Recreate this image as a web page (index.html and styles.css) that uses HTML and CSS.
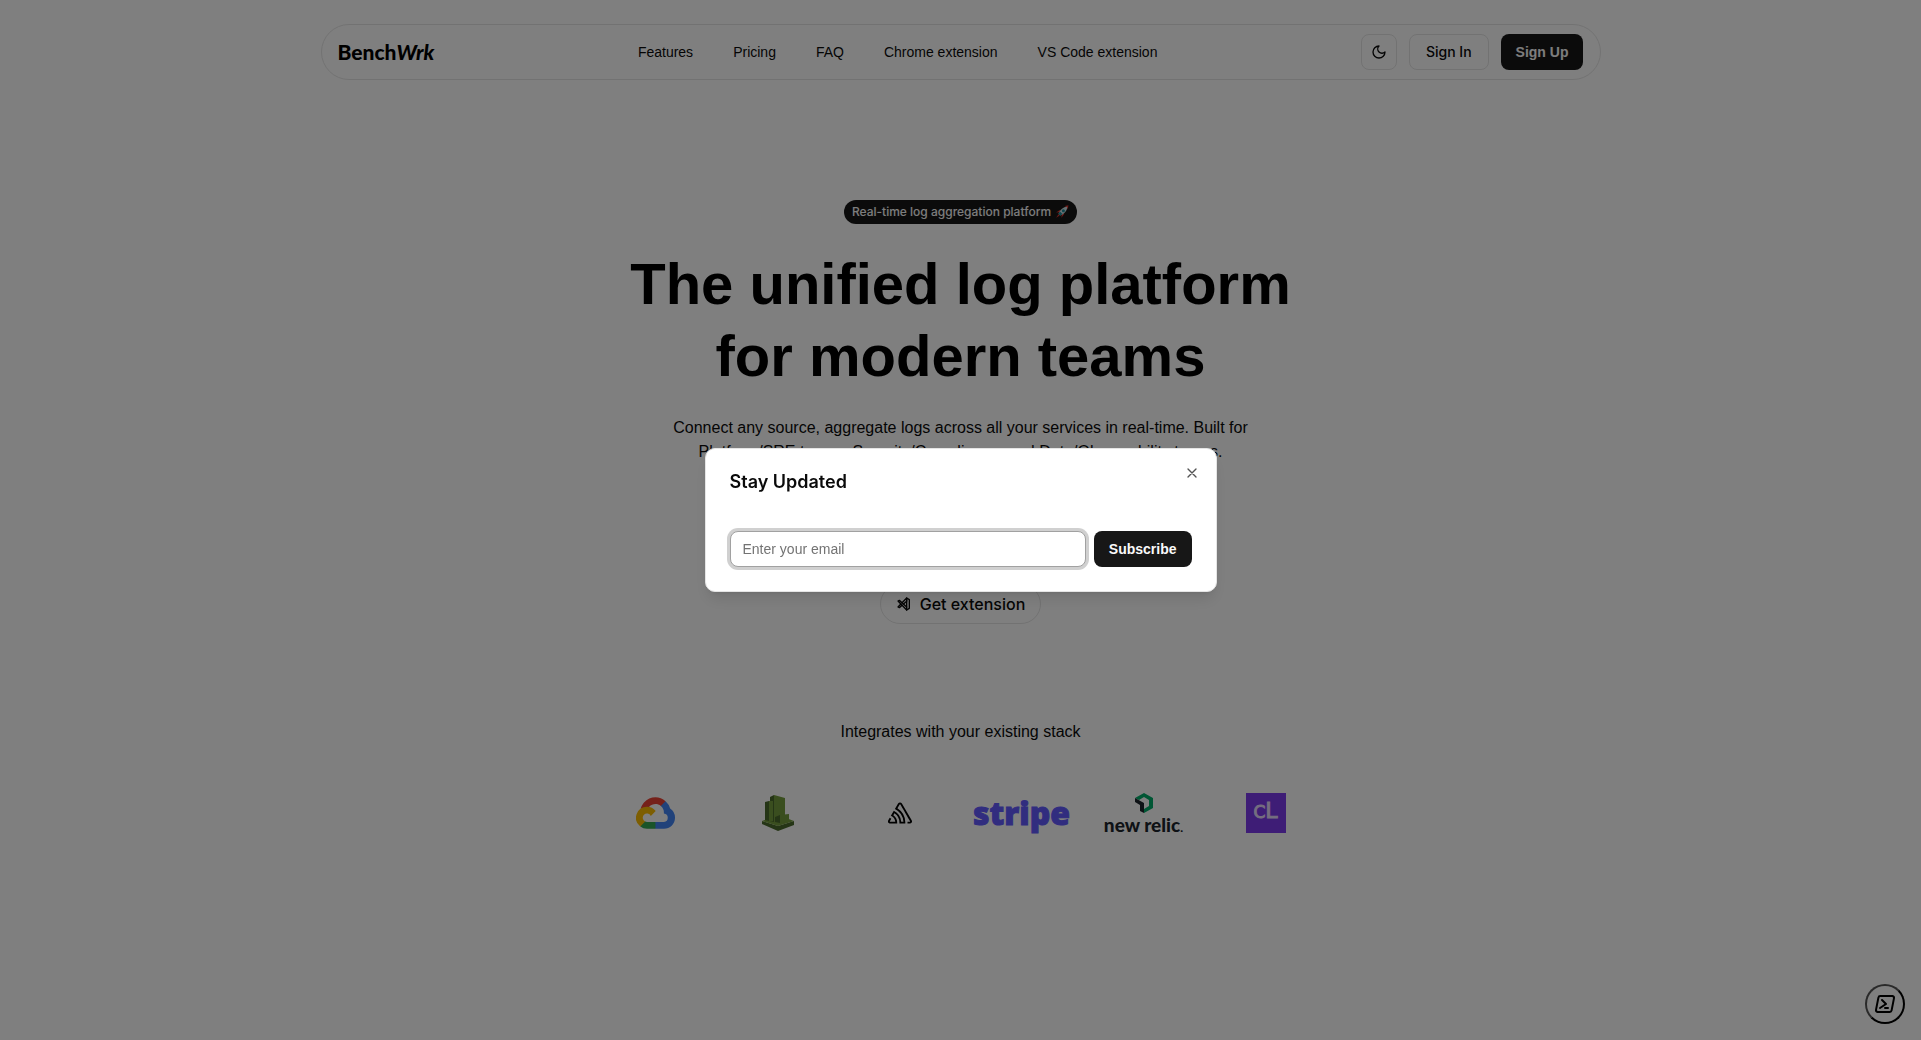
FILE: index.html
```html
<!doctype html>
<html lang="en">
<head>
  <meta charset="UTF-8">
  <meta name="viewport" content="width=device-width, initial-scale=1.0">
  <title>BenchWrk</title>
  <link rel="stylesheet" href="styles.css">
</head>
<body>
<header class="header">
  <a class="brand" href="#">Bench<em>Wrk</em></a>
  <nav class="nav">
    <a href="#">Features</a>
    <a href="#">Pricing</a>
    <a href="#">FAQ</a>
    <a href="#">Chrome extension</a>
    <a href="#">VS Code extension</a>
  </nav>
  <div class="actions">
    <button class="btn btn-icon" type="button" aria-label="Toggle theme">
      <svg class="icon" viewBox="0 0 24 24"><path d="M12 3a6 6 0 0 0 9 9 9 9 0 1 1-9-9Z"/></svg>
    </button>
    <a class="btn" href="#">Sign In</a>
    <a class="btn btn-dark" href="#">Sign Up</a>
  </div>
</header>

<main>
  <section class="hero">
    <div class="badge">
      Real-time log aggregation platform
      <svg class="rocket" viewBox="0 0 12 12">
        <path fill="#e0342c" d="M1 6.500 4.500 4l1 2zM5.500 11 8 7.500 6 6.500zM8.500.8 11.500.3 11 3.500z"/>
        <path fill="#cfe3e6" d="M10.500 1.500C7 1.500 4.500 4 3 7.500L4.500 9C8 7.500 10.500 5 10.500 1.500z"/>
        <circle fill="#1f8f9c" cx="7.200" cy="4.900" r="1.300"/>
        <path fill="#1f8f9c" d="M3 7.500 4.500 9l2-1.200L4.200 5.500z"/>
        <path fill="#e0342c" d="M3 8 1 11l3-2z"/>
      </svg>
    </div>
    <h1>The unified log platform<br>for modern teams</h1>
    <p class="lead">Connect any source, aggregate logs across all your services in real-time. Built for<br>Platform/SRE teams, Security/Compliance, and Data/Observability teams.</p>
    <a class="pill" href="#">
      <svg class="icon" viewBox="0 0 24 24"><path d="M16 3v18l4-2.500v-13z"/><path d="M9.165 13.903 5 17.500l-2-1L7.333 12m1.735-1.802L16 3v5l-4.795 4.141"/><path d="M16 16.500 5 6.500l-2 1L16 21"/></svg>
      Get extension
    </a>
  </section>

  <section class="stack">
    <p>Integrates with your existing stack</p>
    <ul class="logos">
      <li>
        <svg class="gcloud" viewBox="0 0 256 206" role="img" aria-label="Google Cloud">
          <path fill="#EA4335" d="M170.250 56.800 192.500 34.560 194 25.200C153.440-11.680 88.980-7.500 52.420 33.920 42.270 45.420 34.730 59.760 30.720 74.570l7.970-1.120 44.500-7.340 3.440-3.510c19.800-21.750 53.270-24.670 76.130-6.170z"/>
          <path fill="#4285F4" d="M224.200 73.920A96 96 0 0 0 194 25.200l-31.230 31.230a55.500 55.500 0 0 1 20.380 44.040V106a27.750 27.750 0 0 1 0 55.290h-55.670l-5.470 5.930v33.340l5.470 5.240h55.670c39.930.310 72.550-31.500 72.860-71.430a72.300 72.300 0 0 0-31.800-60.450"/>
          <path fill="#34A853" d="M71.870 205.800h55.590v-44.510H71.870a27.300 27.300 0 0 1-11.400-2.500l-8.010 2.470-22.310 22.250-1.940 7.530a71.800 71.800 0 0 0 43.660 14.760"/>
          <path fill="#FBBC05" d="M71.870 61.430A72.300 72.300 0 0 0 28.200 191.040l32.270-32.250a27.710 27.710 0 1 1 36.780-36.770l32.260-32.270a72.200 72.200 0 0 0-57.640-28.320"/>
        </svg>
      </li>
      <li>
        <svg class="cloudwatch" viewBox="0 0 32 36" role="img" aria-label="Amazon CloudWatch">
          <path fill="#4b6a2c" d="M0 26 16 31 32 26v4L16 36 0 29z"/>
          <path fill="#759c3e" d="M0 26 16 20l16 6-16 5z"/>
          <path fill="#4b6a2c" d="M3 7l4-1v20l-4-1zM8 2l4-2v27l-4-1z"/>
          <path fill="#759c3e" d="M7 6h4v20H7zM12 0l11 3v22l-11 2z"/>
          <path fill="#4b6a2c" d="M13 22l5-2v8l-5-1z"/>
          <path fill="#759c3e" d="M18 20l9-1v7l-9 2z"/>
        </svg>
      </li>
      <li>
        <svg class="sentry" viewBox="0 0 24 24" role="img" aria-label="Sentry"><path d="M13.910 2.505c-.873-1.448-2.972-1.448-3.844 0L6.904 7.920a15.478 15.478 0 0 1 8.530 12.811h-2.221A13.301 13.301 0 0 0 5.784 9.814l-2.926 5.060a7.650 7.650 0 0 1 4.435 5.848H2.194a.365.365 0 0 1-.298-.534l1.413-2.402a5.160 5.160 0 0 0-1.614-.913L.296 19.275a2.182 2.182 0 0 0 .812 2.999 2.240 2.240 0 0 0 1.086.288h6.983a9.322 9.322 0 0 0-3.845-8.318l1.110-1.922a11.470 11.470 0 0 1 4.950 10.240h5.915a17.242 17.242 0 0 0-7.885-15.280l2.244-3.845a.370.370 0 0 1 .504-.130c.255.140 9.750 16.708 9.928 16.900a.365.365 0 0 1-.327.543h-2.287c.029.612.029 1.223 0 1.831h2.297a2.206 2.206 0 0 0 1.922-3.310z"/></svg>
      </li>
      <li><span class="stripe">stripe</span></li>
      <li class="newrelic">
        <svg viewBox="0 0 18 20" aria-hidden="true">
          <path fill="#00ac69" d="M9 0 18 5v10l-9 5v-4l5-3V7L9 4 4 7 0 5z"/>
          <path fill="#1d252c" d="M0 5l9 5v10l-4-2v-6L0 9z"/>
        </svg>
        <span>new relic<small>.</small></span>
      </li>
      <li><span class="cl"><small>C</small>L</span></li>
    </ul>
  </section>
</main>

<button class="terminal" type="button" aria-label="Open terminal">
  <svg viewBox="0 0 24 24"><path d="M4.887 20h11.868c.893 0 1.664-.665 1.847-1.592l2.358-12c.212-1.081-.442-2.140-1.462-2.366A1.784 1.784 0 0 0 19.113 4H7.245c-.893 0-1.664.665-1.847 1.592l-2.358 12c-.212 1.081.442 2.140 1.462 2.366.127.028.256.042.385.042z"/><path d="m9 8 4 4-6 4M12 16h3"/></svg>
</button>

<div class="overlay">
  <div class="modal" role="dialog" aria-modal="true" aria-labelledby="modal-title">
    <button class="close" type="button" aria-label="Close">
      <svg class="icon" viewBox="0 0 24 24"><path d="M18 6 6 18M6 6l12 12"/></svg>
    </button>
    <h2 id="modal-title">Stay Updated</h2>
    <form class="subscribe">
      <input type="email" placeholder="Enter your email" aria-label="Email">
      <button class="btn btn-dark" type="submit">Subscribe</button>
    </form>
  </div>
</div>
</body>
</html>
```
FILE: styles.css
```css
* {
  box-sizing: border-box;
  margin: 0;
  padding: 0;
}
body {
  min-height: 100vh;
  padding: 24px 16px;
  background: #fff;
  color: #0a0a0a;
  font: 16px/24px "Liberation Sans", Arial, sans-serif;
}
a {
  color: inherit;
  text-decoration: none;
}
button, input {
  font: inherit;
}
.icon {
  width: 16px;
  height: 16px;
  fill: none;
  stroke: currentColor;
  stroke-width: 2;
  stroke-linecap: round;
  stroke-linejoin: round;
}

/* header */
.header {
  display: flex;
  align-items: center;
  justify-content: space-between;
  max-width: 1280px;
  height: 56px;
  margin: 0 auto;
  padding: 0 16px;
  border: 1px solid #e5e5e5;
  border-radius: 28px;
}
.brand {
  color: #000;
  font: 900 21px/24px Lato, sans-serif;
}
.nav {
  display: flex;
  gap: 40px;
  font-size: 14px;
}
.actions {
  display: flex;
  gap: 12px;
}
.btn {
  display: flex;
  align-items: center;
  justify-content: center;
  height: 36px;
  padding: 0 16px;
  border: 1px solid #e5e5e5;
  border-radius: 8px;
  background: none;
  color: #0a0a0a;
  font: 500 14px/20px Inter, sans-serif;
}
.btn-icon {
  width: 36px;
  padding: 0;
}
.btn-dark {
  padding: 0 15px;
  border: 0;
  background: #171717;
  color: #fafafa;
  font: bold 14px/20px "Liberation Sans", Arial, sans-serif;
}

/* hero */
.hero {
  display: flex;
  flex-direction: column;
  align-items: center;
  padding-top: 120px;
  text-align: center;
}
.badge {
  display: flex;
  align-items: center;
  gap: 4px;
  height: 24px;
  padding: 0 8px;
  border-radius: 12px;
  background: #171717;
  color: #fafafa;
  font: 500 12px/16px Inter, sans-serif;
}
.rocket {
  width: 14px;
  height: 14px;
}
h1 {
  margin-top: 24px;
  color: #000;
  font: bold 58px/72px "Liberation Sans", Arial, sans-serif;
}
.lead {
  margin-top: 24px;
}
.pill {
  display: flex;
  align-items: center;
  gap: 8px;
  height: 40px;
  margin-top: 120px;
  padding: 0 15px;
  border: 1px solid #e5e5e5;
  border-radius: 20px;
  font: 500 16px/24px Inter, sans-serif;
}

/* integrations */
.stack {
  padding-top: 96px;
  text-align: center;
}
.logos {
  display: grid;
  grid-template-columns: repeat(6, minmax(0, 1fr));
  gap: 32px;
  max-width: 700px;
  margin: 49px auto 0;
  list-style: none;
}
.logos li {
  display: flex;
  align-items: center;
  justify-content: center;
  height: 40px;
}
.gcloud {
  width: 39px;
  height: 32px;
}
.cloudwatch {
  width: 32px;
  height: 36px;
}
.sentry {
  width: 24px;
  height: 24px;
}
.stripe {
  color: #635bff;
  font: 800 32px/40px "Open Sans", sans-serif;
  -webkit-text-stroke: 1px #635bff;
}
.logos .newrelic {
  flex-direction: column;
  justify-content: flex-start;
  gap: 2px;
  color: #1d252c;
  font: 900 19px/20px Lato, sans-serif;
  white-space: nowrap;
}
.newrelic svg {
  flex: none;
  width: 18px;
  height: 20px;
}
.newrelic small {
  font-size: 12px;
}
.cl {
  width: 40px;
  height: 40px;
  background: #7c3aed;
  color: #e9dcff;
  font: 22px/36px "DejaVu Sans", sans-serif;
  -webkit-text-stroke: 1px #e9dcff;
}
.cl small {
  font-size: 17px;
}

.terminal {
  position: fixed;
  right: 16px;
  bottom: 16px;
  display: flex;
  align-items: center;
  justify-content: center;
  width: 40px;
  height: 40px;
  border: 2px outset #000;
  border-radius: 50%;
  background: none;
}
.terminal svg {
  flex: none;
  width: 24px;
  height: 24px;
  fill: none;
  stroke: #000;
  stroke-width: 2;
  stroke-linecap: round;
  stroke-linejoin: round;
}

/* newsletter modal */
.overlay {
  position: fixed;
  inset: 0;
  display: flex;
  align-items: center;
  justify-content: center;
  background: rgba(0, 0, 0, .5);
}
.modal {
  position: relative;
  width: 100%;
  max-width: 512px;
  padding: 24px;
  border: 1px solid #e5e5e5;
  border-radius: 10px;
  background: #fff;
  box-shadow: 0 10px 15px -3px rgba(0, 0, 0, .1), 0 4px 6px -4px rgba(0, 0, 0, .1);
}
.modal h2 {
  font: 600 18px/18px Inter, sans-serif;
}
.close {
  position: absolute;
  top: 16px;
  right: 16px;
  display: flex;
  border: 0;
  background: none;
  color: #0a0a0a;
  opacity: .7;
}
.subscribe {
  display: flex;
  gap: 8px;
  margin-top: 40px;
}
.subscribe input {
  flex: 1;
  min-width: 0;
  height: 36px;
  padding: 0 12px;
  border: 1px solid #a1a1a1;
  border-radius: 8px;
  outline: 0;
  background: #fff;
  box-shadow: 0 0 0 3px rgba(161, 161, 161, .5);
  font-size: 14px;
}
.subscribe input::placeholder {
  color: #737373;
}
```
